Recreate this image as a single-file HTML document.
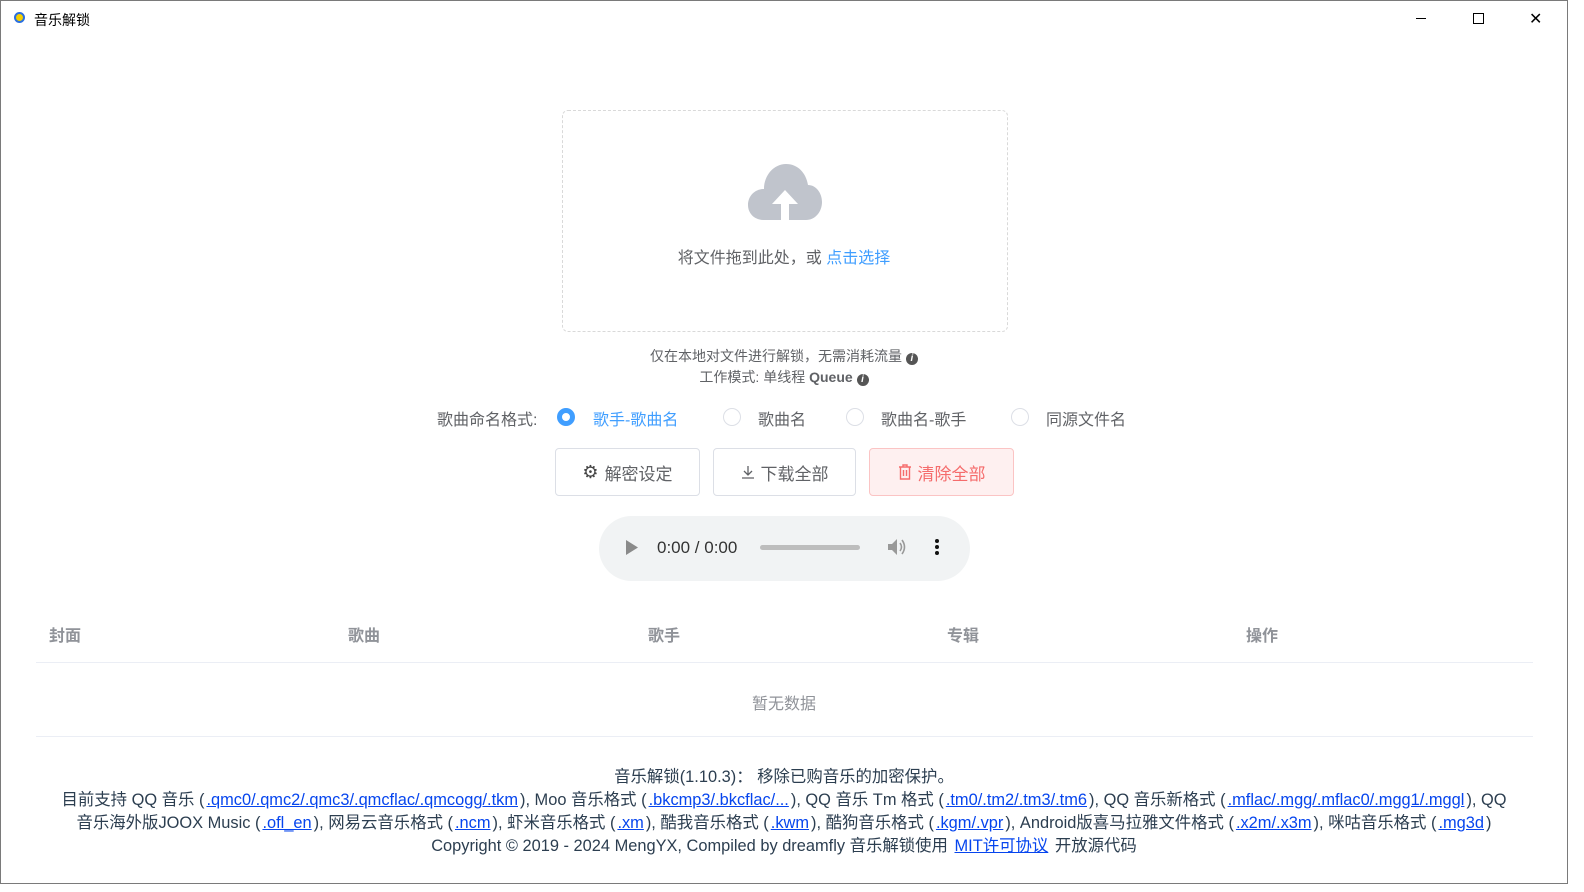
<!DOCTYPE html>
<html><head><meta charset="utf-8"><style>
*{margin:0;padding:0;box-sizing:border-box}
body{width:1584px;height:892px;background:#fff;font-family:"Liberation Sans","Noto Sans CJK SC",sans-serif;position:relative;overflow:hidden;color:#606266}
.a{position:absolute;white-space:nowrap}
.win{position:absolute;left:0;top:0;width:1568px;height:884px;border:1px solid #7a7a7a}
.btn{position:absolute;top:448px;height:48px;border:1px solid #dcdfe6;border-radius:4px;font-size:17px;color:#606266;display:flex;align-items:center;justify-content:center;gap:6px}
.radio{position:absolute;top:408px;width:18px;height:18px;border:1px solid #dcdfe6;border-radius:50%}
.th{position:absolute;top:622px;font-size:16px;color:#909399;font-weight:bold}
.ft{position:absolute;left:0;width:1568px;text-align:center;font-size:16.4px;color:#2c3e50;white-space:nowrap}
.ft a{color:#0645ee;text-decoration:underline;padding:0 2px}
</style></head><body>
<div class="win"></div>
<div class="a" style="left:14px;top:12px;width:11px;height:11px;border-radius:50%;border:2px solid #2a6fe0;background:#f5d000"></div>
<div class="a" style="left:34px;top:10px;font-size:14px;color:#000">音乐解锁</div>
<div class="a" style="left:1416px;top:18px;width:10px;height:1px;background:#000"></div>
<div class="a" style="left:1473px;top:13px;width:11px;height:11px;border:1px solid #000"></div>
<div class="a" style="left:1529px;top:9px;font-size:16px;color:#000">✕</div>

<div class="a" style="left:562px;top:110px;width:446px;height:222px;border:1px dashed #d9d9d9;border-radius:6px"></div>
<svg class="a" style="left:748px;top:163px" width="74" height="58" viewBox="0 0 74 58"><path d="M16 57 C6 57 0 50 0 42 C0 33 7 26 16 26 C16 12 26 1 38 1 C50 1 58 10 60 22 C68 22 74 30 74 39 C74 49 67 57 58 57 Z" fill="#c0c4cc"/><path d="M37 27 L50 41 L41 41 L41 57 L33 57 L33 41 L24 41 Z" fill="#fff"/></svg>
<div class="a" style="left:0;width:1568px;text-align:center;top:244px;font-size:16px;color:#606266">将文件拖到此处，或 <span style="color:#409eff">点击选择</span></div>
<div class="a" style="left:0;width:1568px;text-align:center;top:346px;font-size:14px;color:#606266">仅在本地对文件进行解锁，无需消耗流量 <span style="display:inline-block;width:12px;height:12px;border-radius:50%;background:#555;color:#fff;font-size:10px;line-height:12px;font-style:italic;font-weight:bold">i</span></div>
<div class="a" style="left:0;width:1568px;text-align:center;top:367px;font-size:14px;color:#606266">工作模式: 单线程 <b>Queue</b> <span style="display:inline-block;width:12px;height:12px;border-radius:50%;background:#555;color:#fff;font-size:10px;line-height:12px;font-style:italic;font-weight:bold">i</span></div>

<div class="a" style="left:437px;top:406px;font-size:16px;color:#606266">歌曲命名格式:</div>
<div class="radio" style="left:557px;border:5px solid #409eff;background:#fff"></div>
<div class="a" style="left:593px;top:406px;font-size:16px;color:#409eff">歌手-歌曲名</div>
<div class="radio" style="left:723px"></div>
<div class="a" style="left:758px;top:406px;font-size:16px">歌曲名</div>
<div class="radio" style="left:846px"></div>
<div class="a" style="left:881px;top:406px;font-size:16px">歌曲名-歌手</div>
<div class="radio" style="left:1011px"></div>
<div class="a" style="left:1046px;top:406px;font-size:16px">同源文件名</div>

<div class="btn" style="left:555px;width:145px"><span style="font-size:18px;color:#444">⚙</span>解密设定</div>
<div class="btn" style="left:713px;width:143px"><svg width="14" height="14" viewBox="0 0 14 14"><path d="M7 1V10M3 6L7 10L11 6M1 13H13" stroke="#606266" stroke-width="1.3" fill="none"/></svg>下载全部</div>
<div class="btn" style="left:869px;width:145px;background:#fef0f0;border-color:#fbc4c4;color:#f56c6c"><svg width="14" height="16" viewBox="0 0 14 16"><path d="M1 3H13M5 3V1H9V3M2.5 3V15H11.5V3M5.5 6V12M8.5 6V12" stroke="#f56c6c" stroke-width="1.4" fill="none"/></svg>清除全部</div>

<div class="a" style="left:599px;top:516px;width:371px;height:65px;border-radius:33px;background:#f1f3f4"></div>
<svg class="a" style="left:626px;top:540px" width="12" height="15"><path d="M0 0L12 7.5L0 15Z" fill="#8a8a8a"/></svg>
<div class="a" style="left:657px;top:538px;font-size:17px;color:#333">0:00 / 0:00</div>
<div class="a" style="left:760px;top:545px;width:100px;height:5px;border-radius:3px;background:#bdbdbd"></div>
<svg class="a" style="left:888px;top:538px" width="20" height="18"><path d="M0 6H4L9 1V17L4 12H0Z" fill="#999"/><path d="M12 5Q15 9 12 13M14 2Q19 9 14 16" stroke="#999" stroke-width="1.6" fill="none"/></svg>
<div class="a" style="left:935px;top:539px;width:4px;height:4px;border-radius:50%;background:#111;box-shadow:0 6px 0 #111,0 12px 0 #111"></div>

<div class="th" style="left:49px">封面</div>
<div class="th" style="left:348px">歌曲</div>
<div class="th" style="left:648px">歌手</div>
<div class="th" style="left:947px">专辑</div>
<div class="th" style="left:1246px">操作</div>
<div class="a" style="left:36px;top:662px;width:1497px;height:1px;background:#ebeef5"></div>
<div class="a" style="left:0;width:1568px;text-align:center;top:690px;font-size:16px;color:#909399">暂无数据</div>
<div class="a" style="left:36px;top:736px;width:1497px;height:1px;background:#ebeef5"></div>

<div class="ft" style="top:763px">音乐解锁(1.10.3)： 移除已购音乐的加密保护。</div>
<div class="ft" style="top:786px">目前支持 QQ 音乐 (<a>.qmc0/.qmc2/.qmc3/.qmcflac/.qmcogg/.tkm</a>), Moo 音乐格式 (<a>.bkcmp3/.bkcflac/...</a>), QQ 音乐 Tm 格式 (<a>.tm0/.tm2/.tm3/.tm6</a>), QQ 音乐新格式 (<a>.mflac/.mgg/.mflac0/.mgg1/.mggl</a>), QQ</div>
<div class="ft" style="top:809px">音乐海外版JOOX Music (<a>.ofl_en</a>), 网易云音乐格式 (<a>.ncm</a>), 虾米音乐格式 (<a>.xm</a>), 酷我音乐格式 (<a>.kwm</a>), 酷狗音乐格式 (<a>.kgm/.vpr</a>), Android版喜马拉雅文件格式 (<a>.x2m/.x3m</a>), 咪咕音乐格式 (<a>.mg3d</a>)</div>
<div class="ft" style="top:832px">Copyright © 2019 - 2024 MengYX, Compiled by dreamfly 音乐解锁使用 <a>MIT许可协议</a> 开放源代码</div>
</body></html>
